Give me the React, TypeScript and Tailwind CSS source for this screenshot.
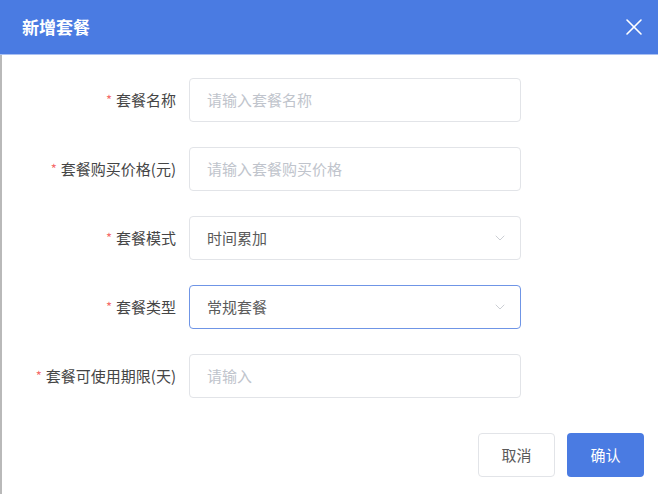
import { ChevronDown, X } from "lucide-react";

const font = { fontFamily: '"Noto Sans CJK SC", "Noto Sans", sans-serif' };

function Field({
  label,
  children,
}: {
  label: string;
  children: React.ReactNode;
}) {
  return (
    <div className="flex items-center">
      <label className="flex w-[187px] shrink-0 items-center justify-end pr-[13px] text-[15px] text-[#454545]">
        <span className="mr-[4px] text-[13px] text-[#f56c6c]">*</span>
        {label}
      </label>
      {children}
    </div>
  );
}

function TextInput({ placeholder }: { placeholder: string }) {
  return (
    <div className="flex h-[44px] w-[332px] items-center rounded-[4px] border border-[#e2e4e8] px-[17px] text-[15px] text-[#c0c4cc]">
      {placeholder}
    </div>
  );
}

function SelectInput({ value, focused }: { value: string; focused?: boolean }) {
  return (
    <div
      className={`flex h-[44px] w-[332px] items-center justify-between rounded-[4px] border pl-[17px] pr-[12px] text-[15px] text-[#5a5a5a] ${
        focused ? "border-[#6f95e6]" : "border-[#e2e4e8]"
      }`}
    >
      <span>{value}</span>
      <ChevronDown size={16} strokeWidth={1.4} className="text-[#c8cbd1]" />
    </div>
  );
}

export default function App() {
  return (
    <div className="h-[498px] w-[658px] bg-white" style={font}>
      <div className="flex h-[55px] items-center justify-between border-b border-[#a9c0f2] bg-[#4a7be2] pl-[22px] pr-[10px]">
        <h2 className="text-[17px] font-bold text-white">新增套餐</h2>
        <X size={28} strokeWidth={1.4} className="text-white" />
      </div>
      <div className="flex h-[439px] flex-col border-l-2 border-[#b9b9b9] pt-[23px]">
        <div className="flex flex-col gap-[25px]">
          <Field label="套餐名称">
            <TextInput placeholder="请输入套餐名称" />
          </Field>
          <Field label="套餐购买价格(元)">
            <TextInput placeholder="请输入套餐购买价格" />
          </Field>
          <Field label="套餐模式">
            <SelectInput value="时间累加" />
          </Field>
          <Field label="套餐类型">
            <SelectInput value="常规套餐" focused />
          </Field>
          <Field label="套餐可使用期限(天)">
            <TextInput placeholder="请输入" />
          </Field>
        </div>
        <div className="mt-[35px] flex justify-end gap-[12px] pr-[14px]">
          <button
            type="button"
            className="h-[44px] w-[77px] rounded-[4px] border border-[#e2e4e8] text-[15px] text-[#5a5a5a]"
          >
            取消
          </button>
          <button
            type="button"
            className="h-[44px] w-[77px] rounded-[4px] bg-[#4a7be2] text-[15px] text-white"
          >
            确认
          </button>
        </div>
      </div>
    </div>
  );
}
